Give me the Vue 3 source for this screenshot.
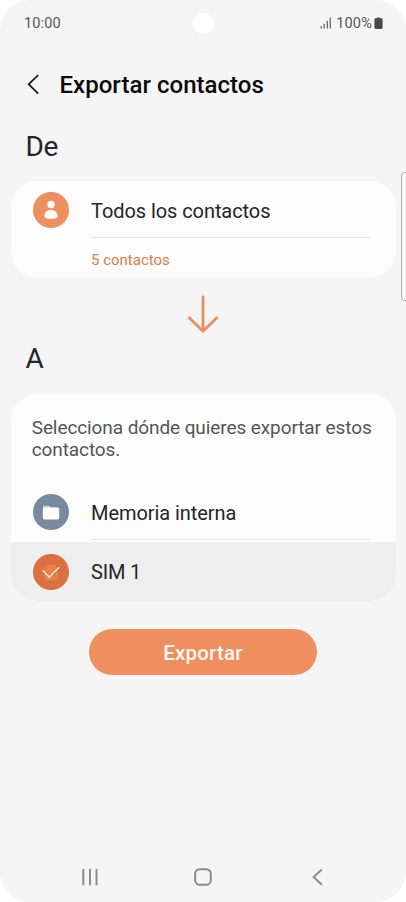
<script setup>
const total = 5
</script>

<template>
  <div class="phone">
    <header class="status">
      <span class="clock">10:00</span>
      <i class="camera"></i>
      <div class="indicators">
        <svg class="signal" width="12" height="12" viewBox="0 0 12 12">
          <path d="M1.2 9.3v2.2M4.2 6.7v4.8M7.3 3.7v7.8M10.3 .6v10.9" />
        </svg>
        <span class="percent">100%</span>
        <svg class="battery" width="9" height="13" viewBox="0 0 9 13">
          <path d="M2.6 1.2Q2.6.4 3.4.4h2.2q.8 0 .8.8h.8Q8.6 1.2 8.6 2.6v8q0 1.4-1.4 1.4H1.8Q.4 12 .4 10.6v-8Q.4 1.2 1.8 1.2Z" />
        </svg>
      </div>
    </header>

    <div class="titlebar">
      <svg class="back" width="14" height="22" viewBox="0 0 14 22">
        <path d="M12.2 1 2.700 10.300l9.500 9.300" />
      </svg>
      <h1>Exportar contactos</h1>
    </div>

    <h2 class="from"><span>De</span></h2>
    <section class="card">
      <div class="row first">
        <svg class="icon" width="36" height="36" viewBox="0 0 36 36">
          <circle cx="18" cy="18" r="18" fill="#ee8f60" />
          <circle cx="18" cy="12.500" r="3.700" fill="#fff" />
          <path d="M11.400 24.200c0-4 2.700-6.200 6.600-6.200s6.600 2.200 6.600 6.200c0 1.800-2.800 2.600-6.600 2.600s-6.600-.8-6.600-2.600Z" fill="#fff" />
        </svg>
        <span class="label all">Todos los contactos</span>
      </div>
      <div class="divider"></div>
      <p class="count"><span>{{ total }} contactos</span></p>
    </section>

    <svg class="arrow" width="32" height="40" viewBox="0 0 32 40">
      <path d="M16 3v34M2.200 23.700 16 37.300l13.800-13.600" />
    </svg>

    <h2 class="to"><span>A</span></h2>
    <section class="card targets">
      <p class="hint">Selecciona dónde quieres exportar estos<br />contactos.</p>
      <div class="row memory">
        <svg class="icon" width="36" height="36" viewBox="0 0 36 36">
          <circle cx="18" cy="18" r="18" fill="#788a9f" />
          <path d="M10 16v-3q0-1.200 1.200-1.200h4.600q.8 0 1.200.6l.8 1.200h6V16Z" fill="#c9d0d9" />
          <rect x="9.800" y="13.400" width="16.400" height="12" rx="1.600" fill="#fff" />
        </svg>
        <span class="label internal">Memoria interna</span>
      </div>
      <div class="divider"></div>
      <div class="row sim">
        <svg class="icon" width="36" height="36" viewBox="0 0 36 36">
          <circle cx="18" cy="18" r="18" fill="#da7140" />
          <path d="M13.200 10.700h8.400l3.400 3.200v10.500q0 1.700-1.700 1.700H13q-1.700 0-1.700-1.700V12.600q0-1.900 1.900-1.900Z" fill="#ea804b" />
          <path d="M14.300 18v5M18 20v3M21.800 18v5" stroke="#da7040" />
          <path d="m9.600 16.300 6.600 6.900 9.900-9.900" fill="none" stroke="#fbe8de" stroke-width="1.500" />
        </svg>
        <span class="label single">SIM 1</span>
      </div>
    </section>

    <button class="export"><span>Exportar</span></button>

    <nav class="navbar">
      <svg width="18" height="18" viewBox="0 0 18 18"><path d="M2.300 1.800v14.600M9 1.800v14.600M15.500 1.800v14.600" /></svg>
      <svg width="18" height="18" viewBox="0 0 18 18"><rect x="1.200" y="1.200" width="15.600" height="15.600" rx="4.600" /></svg>
      <svg width="18" height="18" viewBox="0 0 18 18"><path d="M13.300 2 5.600 9.100l7.700 7.100" /></svg>
    </nav>
    <i class="edge"></i>
  </div>
</template>

<style>
body {
  background: #fff;
}
</style>

<style scoped>
.phone {
  position: relative;
  display: flex;
  flex-direction: column;
  box-sizing: border-box;
  width: 406px;
  height: 902px;
  overflow: hidden;
  border-radius: 30px;
  background: #f5f5f5;
  font-family: Roboto, sans-serif;
  color: #252525;
}
h1, h2, p {
  margin: 0;
  font-weight: 400;
}
.status {
  display: grid;
  grid-template-columns: 1fr 22px 1fr;
  align-items: center;
  height: 46px;
  padding: 0 23px 0 24px;
  font-size: 14.5px;
  color: #555;
}
.clock {
  letter-spacing: 0.15px;
}
.camera {
  width: 21px;
  height: 21px;
  border-radius: 50%;
  background: #fff;
}
.indicators {
  display: flex;
  justify-content: flex-end;
  align-items: center;
}
.percent {
  letter-spacing: 0.2px;
}
.signal {
  margin-right: 4px;
  fill: none;
  stroke: #666;
  stroke-width: 1.3;
}
.battery {
  margin-left: 2px;
  fill: #484848;
}
.titlebar {
  display: flex;
  align-items: center;
  height: 77px;
  padding-left: 26px;
}
.back {
  margin: 0 19.5px 0 0;
  fill: none;
  stroke: #111;
  stroke-width: 1.7;
}
h1 {
  font-size: 24px;
  font-weight: 500;
  letter-spacing: 0.03px;
  color: #0a0a0a;
}
h2 {
  display: flex;
  align-items: center;
  padding-left: 25.5px;
  font-size: 28px;
}
.from {
  height: 47px;
  margin-bottom: 11px;
}
.from span {
  letter-spacing: -0.3px;
}
.card {
  width: 385px;
  flex: none;
  margin-left: 10.7px;
  overflow: hidden;
  border-radius: 26px;
  background: #fdfdfd;
}
.card:not(.targets) {
  height: 96px;
}
.row {
  display: flex;
  align-items: center;
  gap: 22.3px;
  padding-left: 22px;
}
.label {
  font-size: 20px;
}
.all {
  padding-top: 1px;
  letter-spacing: -0.07px;
}
.internal {
  letter-spacing: -0.07px;
}
.divider {
  width: 279px;
  height: 1px;
  margin-left: 80.3px;
  background: #e3e3e3;
}
.first {
  height: 54px;
  padding-top: 2px;
}
.count {
  display: flex;
  align-items: center;
  height: 43px;
  padding-left: 80.3px;
  font-size: 15px;
  color: #df7c4b;
}
.arrow {
  flex: none;
  margin: 16.5px 0 0 187px;
  fill: none;
  stroke: #eb8f60;
  stroke-width: 2.8;
  stroke-linecap: round;
  stroke-linejoin: round;
}
.to {
  height: 49.5px;
  margin-bottom: 11px;
}
.to span {
  padding-top: 1px;
}
.targets {
  height: 207px;
}
.hint {
  box-sizing: border-box;
  height: 92px;
  padding: 23px 0 0 21px;
  font-size: 19px;
  line-height: 22px;
  letter-spacing: -0.09px;
  white-space: nowrap;
  color: #555;
}
.memory {
  height: 53px;
}
.memory .icon {
  margin-bottom: 1px;
}
.single {
  letter-spacing: -0.15px;
}
.sim {
  height: 59px;
  margin-top: 2px;
  background: #eee;
}
.export {
  flex: none;
  width: 228px;
  height: 46px;
  margin: 28px 0 0 89px;
  padding: 2px 0 0;
  border: 0;
  border-radius: 23px;
  background: #ef8f60;
  font: 500 20.5px Roboto, sans-serif;
  letter-spacing: 0.2px;
  color: #fff8f2;
}
.navbar {
  display: flex;
  align-items: center;
  justify-content: space-between;
  height: 50px;
  margin-top: auto;
  padding: 0 80px 0 80.5px;
}
.navbar svg {
  fill: none;
  stroke: #8b8b8b;
  stroke-width: 2;
  stroke-linecap: round;
}
.edge {
  position: absolute;
  top: 172px;
  right: -6px;
  box-sizing: border-box;
  width: 11px;
  height: 129px;
  border: 1px solid #aaa;
  border-radius: 4px;
  background: #f9f9f9;
}
</style>
